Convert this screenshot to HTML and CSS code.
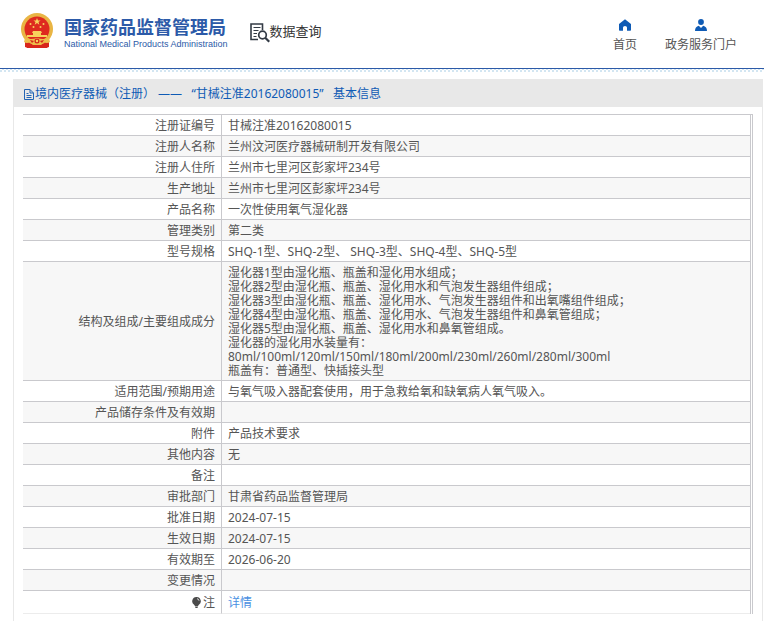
FILE: index.html
```html
<!DOCTYPE html>
<html lang="zh-CN">
  <head>
    <meta charset="UTF-8" />
    <meta name="viewport" content="width=device-width, initial-scale=1.0" />
    <title>国家药品监督管理局 数据查询</title>
    <link rel="stylesheet" href="styles.css">
  </head>
  <body>
    <header class="header">
      <a class="brand" href="#">
        <svg class="emblem" width="32" height="36" viewBox="0 0 32 36">
          <path d="M5 25h22l1 5v4l-3 1H7l-3-1v-4z" fill="#d8261c"></path>
          <circle cx="16" cy="16" r="16" fill="#e9b544"></circle>
          <circle cx="16" cy="16" r="12.500" fill="#de2a1f"></circle>
          <path d="M16 5l1 2.500h2.600l-2.100 1.600.8 2.600-2.300-1.600-2.300 1.600.8-2.600-2.100-1.600H15z" fill="#f7d25c"></path>
          <g fill="#f7d25c">
            <circle cx="9.500" cy="11" r="1"></circle>
            <circle cx="12.500" cy="14" r="1"></circle>
            <circle cx="19.500" cy="14" r="1"></circle>
            <circle cx="22.500" cy="11" r="1"></circle>
            <path d="M12 18h8l1 2h-1v2h6v2H6v-2h6v-2h-1z"></path>
          </g>
          <path d="M4 25q6 2 12 0 6 2 12 0l1 4q-3 2-6 0l-3 3h-8l-3-3q-3 2-6 0z" fill="#edbd4b"></path>
          <path d="M9 27l4 1-2 2zM23 27l-4 1 2 2z" fill="#d8261c"></path>
          <circle cx="16" cy="28" r="2.500" fill="#d8261c"></circle>
          <circle cx="16" cy="28" r="1.200" fill="#f7d25c"></circle>
          <path d="M5 31l4 1v3H6zM27 31l-4 1v3h3zM11 32h10v3H11z" fill="#d8261c"></path>
        </svg>
        <span class="brand-text">
          <span class="brand-name">国家药品监督管理局</span>
          <span class="brand-en">National Medical Products Administration</span>
        </span>
      </a>
      <a class="query" href="#">
        <svg width="20" height="20" viewBox="0 0 20 20" fill="none" stroke="#333b45">
          <path d="M12.500 7V1H1v15.500h7" stroke-width="1.600"></path>
          <path d="M3.500 4.500h7M3.500 7.500h5M3.500 10.500h3.500M3.500 13.500h3" stroke-width="1.200"></path>
          <circle cx="12.500" cy="12" r="3.800" stroke-width="1.700"></circle>
          <path d="M15.200 14.800l4 4" stroke-width="2.200"></path>
        </svg>
        <span>数据查询</span>
      </a>
      <nav class="nav">
        <a href="#">
          <svg width="12" height="12" viewBox="0 0 12 12">
            <path d="M6 .3l6 4.700v6q0 .8-.8.8H8V8.500Q8 7 6 7T4 8.500v3.300H.8Q0 11.800 0 11V5z" fill="#0f5bb5"></path>
          </svg>
          首页
        </a>
        <a href="#">
          <svg width="12" height="12" viewBox="0 0 12 12">
            <circle cx="6" cy="3" r="2.900" fill="#0f5bb5"></circle>
            <path d="M0 12q0-4.500 3.800-5.300L6 9l2.200-2.300Q12 7.500 12 12z" fill="#0f5bb5"></path>
          </svg>
          政务服务门户
        </a>
      </nav>
    </header>

    <main class="panel">
      <h1 class="panel-title">
        <svg width="10" height="11" viewBox="0 0 10 11" fill="none" stroke="#2464b4">
          <path d="M.5.5h5.500l3.500 3.500v6.500h-9zM6 .5V4h3.500M2.500 4.500h2M2.500 6.500h5M2.500 8.500h5"></path>
        </svg>
        <span>境内医疗器械（注册） ——&nbsp;&nbsp; “甘械注准20162080015”&nbsp;&nbsp; 基本信息</span>
      </h1>
      <div class="panel-body">
        <table class="info">
          <tbody>
            <tr><th scope="row">注册证编号</th><td>甘械注准20162080015</td></tr>
            <tr><th scope="row">注册人名称</th><td>兰州汶河医疗器械研制开发有限公司</td></tr>
            <tr><th scope="row">注册人住所</th><td>兰州市七里河区彭家坪234号</td></tr>
            <tr><th scope="row">生产地址</th><td>兰州市七里河区彭家坪234号</td></tr>
            <tr><th scope="row">产品名称</th><td>一次性使用氧气湿化器</td></tr>
            <tr><th scope="row">管理类别</th><td>第二类</td></tr>
            <tr><th scope="row">型号规格</th><td>SHQ-1型、SHQ-2型、 SHQ-3型、SHQ-4型、SHQ-5型</td></tr>
            <tr>
              <th scope="row">结构及组成/主要组成成分</th>
              <td>
                湿化器1型由湿化瓶、瓶盖和湿化用水组成；<br>
                湿化器2型由湿化瓶、瓶盖、湿化用水和气泡发生器组件组成；<br>
                湿化器3型由湿化瓶、瓶盖、湿化用水、气泡发生器组件和出氧嘴组件组成；<br>
                湿化器4型由湿化瓶、瓶盖、湿化用水、气泡发生器组件和鼻氧管组成；<br>
                湿化器5型由湿化瓶、瓶盖、湿化用水和鼻氧管组成。<br>
                湿化器的湿化用水装量有：<br>
                80ml/100ml/120ml/150ml/180ml/200ml/230ml/260ml/280ml/300ml<br>
                瓶盖有：普通型、快插接头型
              </td>
            </tr>
            <tr><th scope="row">适用范围/预期用途</th><td>与氧气吸入器配套使用，用于急救给氧和缺氧病人氧气吸入。</td></tr>
            <tr><th scope="row">产品储存条件及有效期</th><td></td></tr>
            <tr><th scope="row">附件</th><td>产品技术要求</td></tr>
            <tr><th scope="row">其他内容</th><td>无</td></tr>
            <tr><th scope="row">备注</th><td></td></tr>
            <tr><th scope="row">审批部门</th><td>甘肃省药品监督管理局</td></tr>
            <tr><th scope="row">批准日期</th><td>2024-07-15</td></tr>
            <tr><th scope="row">生效日期</th><td>2024-07-15</td></tr>
            <tr><th scope="row">有效期至</th><td>2026-06-20</td></tr>
            <tr><th scope="row">变更情况</th><td></td></tr>
            <tr class="note">
              <th scope="row">
                <svg width="9" height="11" viewBox="0 0 9 11">
                  <path d="M4.500 0a4.200 4.200 0 0 1 2.400 7.700L6 9H3L2.100 7.700A4.200 4.200 0 0 1 4.500 0zM3 9.500h3L5.500 11h-2z" fill="#4a4a4a"></path>
                  <path d="M5 1.700q1.800.3 2 2" fill="none" stroke="#fff" stroke-width=".8"></path>
                </svg>注</th>
              <td><a href="#">详情</a></td>
            </tr>
          </tbody>
        </table>
      </div>
    </main>
  </body>
</html>
```

FILE: styles.css
```css
:root {
  --blue: #0f5bb5;
  --brand: #2c5aa8;
  --text: #555;
  --line: #c9c9cd;
}

* {
  margin: 0;
  padding: 0;
  box-sizing: border-box;
}

body {
  background-color: #fff;
  color: var(--text);
  font-family: "Noto Sans", "Noto Sans CJK SC", sans-serif;
  font-size: 12px;
  line-height: 14px;
}

a {
  color: inherit;
  text-decoration: none;
}

svg {
  flex-shrink: 0;
}

.header {
  display: flex;
  align-items: flex-start;
  height: 72px;
  padding: 13px 27px 0 21px;
  /* blue rule, then a white body over a thin dotted strip */
  background:
    linear-gradient(var(--brand), var(--brand)) 0 68px / 100% 1px no-repeat,
    linear-gradient(#fff, #fff) 0 0 / 100% 68px no-repeat,
    conic-gradient(#d3e6f2 25%, #fff 0 50%, #d3e6f2 0 75%, #fff 0) 0 0 / 4px 4px;
}

.brand {
  display: flex;
  gap: 11px;
  color: var(--brand);
}

.brand-text {
  display: flex;
  flex-direction: column;
  padding-top: 3px;
  white-space: nowrap;
}

.brand-name {
  font-size: 18px;
  font-weight: 700;
  line-height: 22px;
}

.brand-en {
  font-family: "Liberation Sans", Arial, sans-serif;
  font-size: 9px;
  line-height: 12px;
}

.query {
  display: flex;
  align-items: flex-start;
  margin-left: 22px;
  padding-top: 10px;
  color: #333;
  font-size: 13px;
  line-height: 16px;
  white-space: nowrap;
}

.nav {
  display: flex;
  gap: 28px;
  margin-left: auto;
  padding-top: 6px;
}

.nav a {
  display: flex;
  flex-direction: column;
  align-items: center;
  gap: 7px;
  white-space: nowrap;
}

.panel {
  min-height: calc(100vh - 79px);
  margin: 7px 1px 0 13px;
  border: 1px solid #e8e8e8;
  border-width: 0 1px;
}

.panel-title {
  display: flex;
  align-items: center;
  gap: 1px;
  height: 28px;
  padding: 2px 10px 0;
  background-color: #e8e8e8;
  color: var(--blue);
  font-size: 12px;
  font-weight: 400;
}

.panel-body {
  padding: 7px 9px 0;
}

.info {
  width: 100%;
  border-top: 1px solid var(--line);
  border-right: 3px double var(--line);
  border-spacing: 0;
}

.info th,
.info td {
  height: 21px;
  padding: 4px 6px 2px;
  border-bottom: 1px solid var(--line);
  vertical-align: middle;
}

.info th {
  width: 199px;
  border-right: 1px solid var(--line);
  font-weight: 400;
  text-align: right;
}

.info tr:nth-child(even) {
  background-color: #f7f7f7;
}

.info .note th,
.info .note td {
  height: 23px;
  border-bottom-color: #ececec;
}

.note svg {
  margin-right: 2px;
  vertical-align: -1px;
}

.note a {
  color: #4a90e2;
}
```
